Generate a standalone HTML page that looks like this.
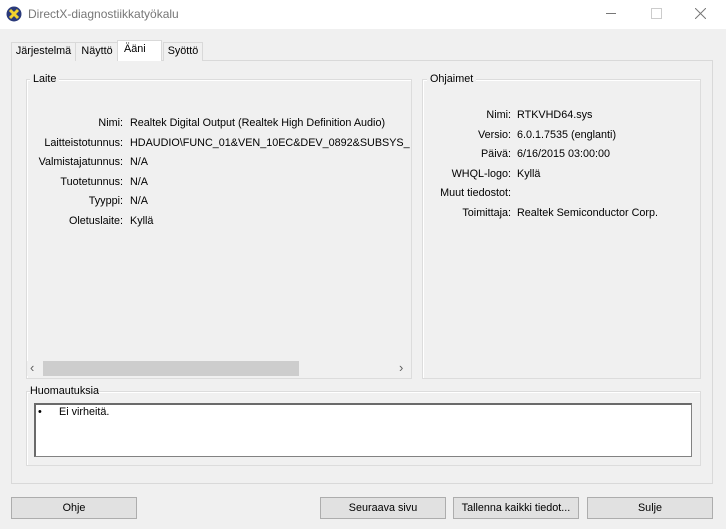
<!DOCTYPE html><html><head><style>
body{margin:0;width:726px;height:529px;background:#f0f0f0;font-family:"Liberation Sans",sans-serif;font-size:10.8px;color:#000;position:relative;overflow:hidden}
.a{position:absolute;white-space:nowrap}
.title{left:0;top:0;width:726px;height:29px;background:#fff}
.tab{top:42px;height:18px;border:1px solid #d9d9d9;border-bottom:none;background:#f0f0f0;line-height:17px;text-align:center}
.panel{left:11px;top:60px;width:700px;height:422px;border:1px solid #d9d9d9;background:#f0f0f0}
.grp{border:1px solid #dcdcdc;box-shadow:inset 1px 1px 0 #fff}
.lg{background:#f0f0f0;padding:0 3px}
.r{text-align:right}
.btn{top:497px;height:20px;border:1px solid #adadad;background:#e1e1e1;text-align:center;line-height:20px}
</style></head><body>
<div class="a title"></div>
<svg class="a" style="left:6px;top:6px" width="16" height="16"><circle cx="8" cy="8" r="7.5" fill="#2a3a7a"/><path d="M4 4L12 12M12 4L4 12" stroke="#f2d22c" stroke-width="3"/></svg>
<div class="a" style="left:28px;top:7px;color:#777;font-size:12px">DirectX-diagnostiikkatyökalu</div>
<div class="a" style="left:606px;top:13px;width:10px;height:1px;background:#777"></div>
<div class="a" style="left:651px;top:8px;width:9px;height:9px;border:1px solid #ccc"></div>
<svg class="a" style="left:695px;top:8px" width="11" height="11"><path d="M0 0L11 11M11 0L0 11" stroke="#777"/></svg>
<div class="panel a"></div>
<div class="a tab" style="left:11px;width:63px">Järjestelmä</div>
<div class="a tab" style="left:75px;width:42px">Näyttö</div>
<div class="a tab" style="left:117px;top:40px;height:21px;width:45px;background:#fff;text-align:left;padding-left:6px;box-sizing:border-box">Ääni</div>
<div class="a tab" style="left:163px;width:38px">Syöttö</div>
<div class="a grp" style="left:26px;top:79px;width:384px;height:298px"></div>
<div class="a lg" style="left:30px;top:73px">Laite</div>
<div class="a grp" style="left:422px;top:79px;width:277px;height:298px"></div>
<div class="a lg" style="left:427px;top:73px">Ohjaimet</div>
<div class="a r" style="left:20px;width:103px;top:114px;line-height:19.6px">Nimi:<br>Laitteistotunnus:<br>Valmistajatunnus:<br>Tuotetunnus:<br>Tyyppi:<br>Oletuslaite:</div>
<div class="a" style="left:130px;width:280px;overflow:hidden;top:114px;line-height:19.6px">Realtek Digital Output (Realtek High Definition Audio)<br>HDAUDIO\FUNC_01&amp;VEN_10EC&amp;DEV_0892&amp;SUBSYS_17AA<br>N/A<br>N/A<br>N/A<br>Kyllä</div>
<div class="a" style="left:27px;top:361px;width:383px;height:15px;background:#f0f0f0"></div>
<div class="a" style="left:43px;top:361px;width:256px;height:15px;background:#cdcdcd"></div>
<div class="a" style="left:30px;top:360px;color:#606060;font-size:13px">‹</div>
<div class="a" style="left:399px;top:360px;color:#606060;font-size:13px">›</div>
<div class="a r" style="left:420px;width:91px;top:106px;line-height:19.6px">Nimi:<br>Versio:<br>Päivä:<br>WHQL-logo:<br>Muut tiedostot:<br>Toimittaja:</div>
<div class="a" style="left:517px;top:106px;line-height:19.6px">RTKVHD64.sys<br>6.0.1.7535 (englanti)<br>6/16/2015 03:00:00<br>Kyllä<br><br>Realtek Semiconductor Corp.</div>
<div class="a grp" style="left:26px;top:391px;width:673px;height:73px"></div>
<div class="a lg" style="left:30px;top:385px;padding:0">Huomautuksia</div>
<div class="a" style="left:34px;top:403px;width:655px;height:51px;background:#fff;border:1px solid #828282;border-top:2px solid #6a6a6a;border-left:2px solid #6a6a6a"></div>
<div class="a" style="left:38px;top:406px">•</div>
<div class="a" style="left:59px;top:406px">Ei virheitä.</div>
<div class="a btn" style="left:11px;width:124px">Ohje</div>
<div class="a btn" style="left:320px;width:124px">Seuraava sivu</div>
<div class="a btn" style="left:453px;width:124px">Tallenna kaikki tiedot...</div>
<div class="a btn" style="left:587px;width:124px">Sulje</div>
</body></html>
